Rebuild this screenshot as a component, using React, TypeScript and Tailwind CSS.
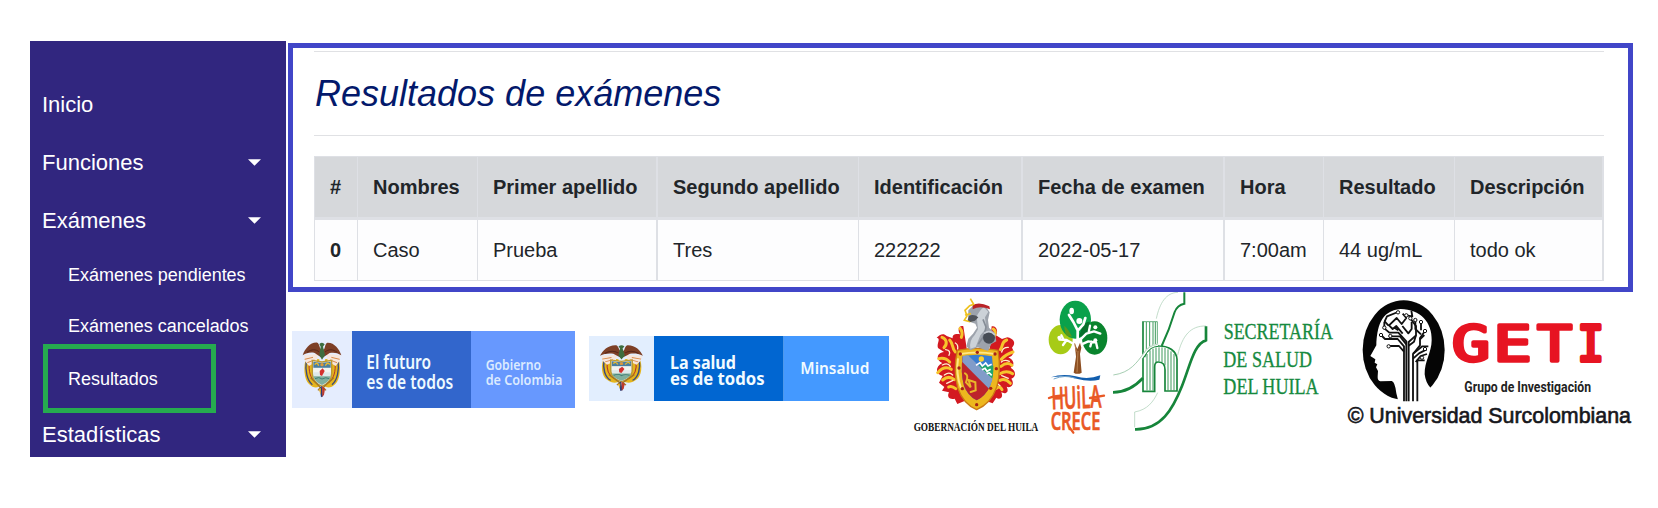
import React from "react";

type Column = { label: string; value: string; width: string; edge: string };

const columns: Column[] = [
  { label: "#", value: "0", width: "w-[43px]", edge: "border-l" },
  { label: "Nombres", value: "Caso", width: "w-[120px]", edge: "border-l" },
  { label: "Primer apellido", value: "Prueba", width: "w-[179px]", edge: "border-l" },
  { label: "Segundo apellido", value: "Tres", width: "w-[202px]", edge: "border-l-2" },
  { label: "Identificación", value: "222222", width: "w-[163px]", edge: "border-l" },
  { label: "Fecha de examen", value: "2022-05-17", width: "w-[202px]", edge: "border-l-2" },
  { label: "Hora", value: "7:00am", width: "w-[100px]", edge: "border-l-2" },
  { label: "Resultado", value: "44 ug/mL", width: "w-[131px]", edge: "border-l" },
  { label: "Descripción", value: "todo ok", width: "w-[150px]", edge: "border-l border-r-2" },
];

function Caret() {
  return (
    <svg width="13" height="7" viewBox="0 0 13 7" className="mb-[2px] mr-[25px]">
      <path d="M0 0.3H13L6.5 6.8Z" fill="#fff" />
    </svg>
  );
}

function MenuItem({ label, caret }: { label: string; caret?: boolean }) {
  return (
    <a className="flex h-[58px] items-center justify-between pl-[12px] text-[22px] leading-none text-white">
      <span>{label}</span>
      {caret && <Caret />}
    </a>
  );
}

function Sidebar() {
  return (
    <nav className="flex h-[416px] w-[256px] flex-col bg-[#31267f] pt-[35px]">
      <MenuItem label="Inicio" />
      <MenuItem label="Funciones" caret />
      <MenuItem label="Exámenes" caret />
      <a className="flex h-[50px] items-center pl-[38px] text-[18px] tracking-[-0.03px] text-white">Exámenes pendientes</a>
      <a className="flex h-[44px] items-end pb-[5px] pl-[38px] text-[18px] leading-[25px] tracking-[-0.03px] text-white">Exámenes cancelados</a>
      <a className="ml-[13px] flex h-[69px] w-[173px] items-center border-[5px] border-[#26ab4f] pl-5 pt-px text-[18px] tracking-[-0.03px] text-white">
        Resultados
      </a>
      <a className="mt-[4px] flex h-[36px] items-center justify-between pl-[12px] text-[22px] leading-none text-white">
        <span>Estadísticas</span>
        <Caret />
      </a>
    </nav>
  );
}

function ResultsPanel() {
  return (
    <section className="h-[249px] w-[1345px] border-[5px] border-[#4146c8] bg-white pl-[21px] pt-[3px]">
      <div className="w-[1290px]">
        <h1 className="flex h-[85px] items-center border-y border-[#e0e1e4] pl-px text-[36px] italic leading-none text-[#03196b]">
          Resultados de exámenes
        </h1>
        <table className="mt-[20px] w-[1290px] table-fixed border-separate border-spacing-0 text-left text-[20px] text-[#212529]">
          <thead>
            <tr>
              {columns.map((c) => (
                <th
                  key={c.label}
                  className={`h-[64px] whitespace-nowrap border-b-[3px] border-t border-[#dee0e5] bg-[#d6d8db] p-0 pl-[15px] font-bold ${c.width} ${c.edge}`}
                >
                  {c.label}
                </th>
              ))}
            </tr>
          </thead>
          <tbody>
            <tr>
              {columns.map((c, i) => (
                <td
                  key={c.label}
                  className={`h-[61px] whitespace-nowrap border-b border-[#dee0e5] bg-[#fdfdfe] p-0 pl-[15px] ${c.edge} ${i === 0 ? "font-bold" : ""}`}
                >
                  {c.value}
                </td>
              ))}
            </tr>
          </tbody>
        </table>
      </div>
    </section>
  );
}

/* National coat of arms, drawn inside the box 53..170 by 66..232. */
function Coat() {
  return (
    <g>
      <path d="M64 112C54 138 57 180 72 192C84 205 98 204 106 198L103 118Z" fill="#e5b51c" />
      <path d="M159 112C169 138 166 180 151 192C139 205 125 204 117 198L120 118Z" fill="#e5b51c" />
      <path d="M64 122C60 150 66 182 82 194M159 122C163 150 157 182 141 194" fill="none" stroke="#3a4a7c" strokeWidth="4" />
      <path d="M73 126C70 152 76 176 92 188M150 126C153 152 147 176 131 188" fill="none" stroke="#b1362c" strokeWidth="3" />
      <path d="M57 106L98 102L96 124L72 138L60 124ZM167 106L125 102L128 124L152 138L163 124Z" fill="#f7e6dc" />
      <path d="M59 118L84 112M67 128L88 120M164 118L139 112M156 128L135 120" stroke="#d88a4b" strokeWidth="3" />
      <path d="M53 106C60 86 76 66 97 68C104 72 103 84 108 88L111 84L116 89C121 84 119 72 127 68C148 67 163 87 169 106C156 97 144 97 134 99L124 106L111 114L99 106L89 99C78 96 65 98 53 106Z" fill="#7d3f26" />
      <path d="M66 97C80 87 92 87 103 96M157 97C143 87 131 87 120 96" stroke="#57271b" strokeWidth="3" fill="none" />
      <path d="M103 72Q112 64 119 73L114 80L120 105L111 119L103 105L107 80Z" fill="#3d6d3f" />
      <path d="M82 121L111 126L140 121V161C139 181 124 193 111 199C98 193 83 181 82 161Z" fill="#dfe8e9" stroke="#bc9933" strokeWidth="4" />
      <path d="M85 125L111 129L137 125V143H85Z" fill="#4a7ea0" />
      <path d="M89 134Q96 124 101 137M121 137Q129 124 134 134" stroke="#e7b82d" strokeWidth="4" fill="none" />
      <circle cx="111" cy="134" r="5" fill="#dd983d" />
      <path d="M85 144H137V157H85Z" fill="#f3f4f0" />
      <path d="M104 153L113 145L119 153L111 168L105 165Z" fill="#d4312e" />
      <path d="M85 169H137C134 183 121 190 111 195C101 190 88 183 85 169Z" fill="#80af9d" />
      <path d="M90 176Q102 169 111 177Q122 170 133 176" fill="none" stroke="#427e76" strokeWidth="3" />
      <path d="M77 173L106 202L99 211M146 173L115 202L123 211" stroke="#a37422" strokeWidth="4" fill="none" />
      <path d="M104 204L110 197L114 229L108 232Z" fill="#2a3d74" />
      <path d="M111 198L120 207L117 224L112 231Z" fill="#be3a2c" />
      <path d="M101 207L108 204L107 224Z" fill="#e6af25" />
    </g>
  );
}

function FuturoLogo() {
  return (
    <svg className="ml-[4px] mt-[39px] shrink-0" width="283" height="77" viewBox="21 33 849 231">
      <rect x="21" y="33" width="180" height="231" fill="#e5edfe" />
      <rect x="201" y="33" width="357" height="231" fill="#3266cc" />
      <rect x="558" y="33" width="312" height="231" fill="#6798fe" />
      <Coat />
      <g fontFamily="'Noto Sans', sans-serif" fontWeight="600">
        <g fontSize="57" fill="#eefaff">
          <text x="244" y="148" textLength="194" lengthAdjust="spacingAndGlyphs">El futuro</text>
          <text x="244" y="206" textLength="261" lengthAdjust="spacingAndGlyphs">es de todos</text>
        </g>
        <g fontSize="42" fill="#dbeaff">
          <text x="602" y="150" textLength="166" lengthAdjust="spacingAndGlyphs">Gobierno</text>
          <text x="602" y="196" textLength="230" lengthAdjust="spacingAndGlyphs">de Colombia</text>
        </g>
      </g>
    </svg>
  );
}

function SaludLogo() {
  return (
    <svg className="ml-[14px] mt-[44px] shrink-0" width="300" height="65" viewBox="27 48 900 195">
      <rect x="27" y="48" width="195" height="195" fill="#e2eefe" />
      <rect x="222" y="48" width="389" height="195" fill="#0166d1" />
      <rect x="611" y="48" width="316" height="195" fill="#4499ff" />
      <g transform="translate(60 74) scale(1.11 .837) translate(-53 -66)">
        <Coat />
      </g>
      <g fontFamily="'Noto Sans', sans-serif" fill="#f2fbff">
        <text x="270" y="146" fontSize="51" fontWeight="700" textLength="198" lengthAdjust="spacingAndGlyphs">La salud</text>
        <text x="270" y="195" fontSize="51" fontWeight="700" textLength="284" lengthAdjust="spacingAndGlyphs">es de todos</text>
        <text x="661" y="162" fontSize="46" fontWeight="600" textLength="207" lengthAdjust="spacingAndGlyphs">Minsalud</text>
      </g>
    </svg>
  );
}

function GobernacionLogo() {
  return (
    <svg className="ml-[21px] mt-[3px] shrink-0" width="132" height="142" viewBox="30 30 396 426">
      <g fill="#d31920">
        <path d="M190 124C176 120 172 135 180 148C166 146 157 148 158 160L140 153C129 142 118 151 110 158C124 161 109 174 114 189L132 201C105 205 111 228 127 234C105 245 106 267 128 273L117 293L133 306L126 317L147 322C139 337 151 345 164 341L172 357L199 346L200 190Z" />
        <path d="M275 124C289 120 296 139 288 151L306 162L322 157C340 160 350 174 336 188C344 200 341 213 325 217C343 226 345 241 332 248C351 259 347 277 334 281C346 297 332 311 320 305C329 323 316 328 304 322C312 340 297 345 289 338L278 355L258 348L270 180Z" />
      </g>
      <g fill="none" stroke="#f6c52c" strokeWidth="9" strokeLinecap="round">
        <path d="M126 157C139 161 144 176 132 188M149 165C162 179 154 188 166 201M116 221Q136 216 149 231M113 263Q134 240 154 253M128 285Q146 270 163 284M146 306Q155 301 167 311M180 130Q190 142 184 157" />
        <path d="M320 165C303 171 310 183 301 194M339 201Q317 208 304 223M336 241Q322 229 303 244M338 266Q320 254 300 266M331 295Q315 278 300 286M306 314Q300 301 289 310M280 132Q291 140 281 157" />
      </g>
      <g stroke="#fff0d0" strokeWidth="4" fill="none" strokeLinecap="round">
        <path d="M137 194Q154 196 147 211M127 240Q144 232 151 244M133 270Q148 259 158 270M140 295L159 286M166 174Q175 179 173 192M325 187Q309 186 305 201M328 229Q313 222 304 231M325 280L305 272M300 302L289 293" />
      </g>
      <path d="M172 196Q231 184 294 196Q304 260 290 307Q272 357 230 374Q190 357 173 308Q159 255 172 196Z" fill="#edb71e" stroke="#ca7a14" strokeWidth="4" />
      <path d="M181 207Q232 198 284 207M174 220Q167 267 183 309" fill="none" stroke="#ffe785" strokeWidth="6" />
      <path d="M188 214Q232 204 276 214Q283 266 271 301Q256 334 230 346Q203 332 192 302Q181 263 188 214Z" fill="#387dd1" />
      <path d="M188 214L270 305Q254 335 230 346Q203 332 192 302Q181 263 188 214Z" fill="#bd242b" />
      <path d="M223 241L280 242Q282 275 268 305Z" fill="#20a66d" />
      <path d="M188 213L204 211L278 282L267 311Q228 273 187 231Z" fill="#819cc9" />
      <path d="M228 241L240 233L247 243L257 234L264 243L275 238M246 254L255 250L261 259L272 253M260 266L268 264L275 271" fill="none" stroke="#fff" strokeWidth="5" />
      <circle cx="244" cy="222" r="8" fill="#ffd12d" />
      <path d="M195 265Q207 270 198 292L212 307L206 285L226 292L227 316L212 321" fill="none" stroke="#e9b829" strokeWidth="6" strokeLinecap="round" />
      <g fill="#a62218">
        <circle cx="181" cy="207" r="5" /><circle cx="232" cy="202" r="5" /><circle cx="285" cy="207" r="5" /><circle cx="177" cy="249" r="5" /><circle cx="289" cy="251" r="5" /><circle cx="187" cy="311" r="5" /><circle cx="272" cy="310" r="5" /><circle cx="230" cy="359" r="5" />
      </g>
      <path d="M199 184L205 161L219 146L231 128L226 116L217 113L204 109L205 76L225 57L256 62L269 82L264 105L267 128L284 144L289 169L274 177L264 198L233 187L211 196Z" fill="#9da3ac" />
      <path d="M230 94Q240 75 251 67L265 80L255 97L259 130L241 151L227 186L211 191Q207 167 224 150L234 133Z" fill="#ccd2d8" />
      <path d="M249 103L258 126L253 151L235 177" stroke="#858c96" strokeWidth="5" fill="none" />
      <circle cx="267" cy="158" r="18" fill="#464c55" />
      <path d="M252 145Q270 132 285 150" stroke="#c7ccd4" strokeWidth="5" fill="none" />
      <path d="M218 61Q236 49 268 64L270 73Q241 61 218 73Z" fill="#ba2327" />
      <path d="M211 41L221 58L209 62L195 76L201 93L193 106L209 110L224 99M195 90L213 86" stroke="#efc21e" strokeWidth="5" fill="none" />
      <path d="M207 93Q221 86 235 97L225 107L211 111L203 105Z" fill="#50545b" />
      <text x="41" y="439" fontFamily="'Liberation Serif', serif" fontWeight="700" fontSize="35" fill="#111" textLength="374" lengthAdjust="spacingAndGlyphs">GOBERNACIÓN DEL HUILA</text>
    </svg>
  );
}

function HuilaCreceLogo() {
  return (
    <svg className="ml-[3px] mt-[4px] shrink-0" width="66" height="140" viewBox="18 48 198 420">
      <ellipse cx="65" cy="179" rx="36" ry="44" fill="#a7cb16" />
      <ellipse cx="167" cy="174" rx="38" ry="50" fill="#09842d" />
      <ellipse cx="109" cy="119" rx="47" ry="57" fill="#0aa14b" />
      <path d="M130 140Q139 125 152 125Q155 143 143 163Q130 172 119 170Z" fill="#06712b" />
      <path d="M76 137Q88 147 99 170L84 168Q76 158 76 137Z" fill="#58981b" />
      <g fill="none" stroke="#fff" strokeWidth="7" strokeLinecap="round" strokeLinejoin="round">
        <path d="M116 199V151L103 126L90 105M117 151L133 133L139 114" strokeWidth="8" />
        <path d="M103 191L83 180L61 179M83 180L72 195M73 178L67 166" />
        <path d="M121 182L142 161L165 154L184 161M149 157L153 137" />
        <path d="M126 194L148 184L171 187L175 204M158 185L154 199" />
      </g>
      <g fill="#fff"><ellipse cx="98" cy="93" rx="7" ry="10" /><circle cx="121" cy="123" r="9" /><circle cx="61" cy="173" r="6" /><circle cx="169" cy="142" r="6" /><circle cx="169" cy="181" r="6" /></g>
      <path d="M107 190L115 207L123 188L127 203L123 222L128 278Q115 285 104 278L111 230Z" fill="#8d4f22" />
      <path d="M107 190L112 215M117 213L114 277" stroke="#ba8250" strokeWidth="3" />
      <path d="M36 292Q70 279 110 289Q147 300 184 286L181 299Q149 306 113 296Q77 285 36 292Z" fill="#125eae" />
      <path d="M44 297Q78 283 110 295" stroke="#77a8ce" strokeWidth="3" fill="none" />
      <g fontFamily="'Open Sans', sans-serif" fontWeight="600" fill="#e95824" stroke="#e95824" strokeWidth="2">
        <text x="37" y="385" fontSize="92" textLength="150" lengthAdjust="spacingAndGlyphs" transform="rotate(-2 111 360)">HUiLA</text>
        <text x="35" y="449" fontSize="75" textLength="149" lengthAdjust="spacingAndGlyphs">CRECE</text>
      </g>
      <path d="M30 354Q49 346 78 346M153 354L195 347M92 443L103 458" stroke="#e95824" strokeWidth="7" strokeLinecap="round" fill="none" />
    </svg>
  );
}

function SecretariaLogo() {
  return (
    <svg className="ml-[2px] shrink-0" width="222" height="144" viewBox="219 36 666 432">
      <g fill="none" stroke="#a4cbb1" strokeWidth="2">
        <path d="M219 287C267 281 290 252 310 223C324 198 334 193 355 192M349 116C359 69 378 38 414 37M413 226C427 166 452 137 498 138M284 396C323 389 340 365 353 338" />
        <path d="M284 396V442" />
      </g>
      <g fill="none" stroke="#16853a">
        <path d="M219 337C258 337 285 320 309 294" strokeWidth="8" />
        <path d="M365 198C385 156 395 126 404 96Q412 75 433 71M433 37V74" strokeWidth="6" />
        <path d="M285 448C364 450 399 386 426 318C451 255 462 190 499 181M498 139V184" strokeWidth="8" />
        <path d="M309 124V334H344V260Q344 245 356 246Q375 247 375 269V333H411V238C410 213 386 198 358 198C333 197 320 211 313 232" strokeWidth="5" />
        <path d="M311 125H352V192" strokeWidth="2" />
        <path d="M319 126V211M329 126V201M339 126V196M346 126V192M321 222V331M330 211V331M339 206V331M348 203V246M357 202V244M366 202V247M375 204V256M384 208V331M393 214V331M402 222V331" strokeWidth="2.5" />
      </g>
      <path d="M219 286C271 281 293 249 313 221Q329 195 354 194" fill="none" stroke="#fff" strokeWidth="7" />
      <path d="M220 285C271 278 291 247 311 220Q326 196 353 193" fill="none" stroke="#78b48b" strokeWidth="2" />
      <g fontFamily="'Liberation Serif', serif" fontSize="70" fill="#168a3e" stroke="#168a3e" strokeWidth="1">
        <text x="551" y="178" textLength="328" lengthAdjust="spacingAndGlyphs">SECRETARÍA</text>
        <text x="550" y="260" textLength="266" lengthAdjust="spacingAndGlyphs">DE SALUD</text>
        <text x="550" y="341" textLength="286" lengthAdjust="spacingAndGlyphs">DEL HUILA</text>
      </g>
    </svg>
  );
}

function GetiLogo() {
  return (
    <svg className="ml-[11px] shrink-0" width="288" height="144" viewBox="48 21 864 432">
      <ellipse cx="221" cy="195" rx="123" ry="149" fill="#050505" />
      <path d="M205 349L199 325Q195 290 185 288L151 289Q142 287 143 274L144 258L138 247L142 238L134 233L136 223L121 213L139 181C141 128 151 77 212 72C271 73 307 112 305 166C305 202 283 230 284 268Q287 294 302 309L290 326L274 340L264 352Z" fill="#fff" />
      <g fill="none" stroke="#111" strokeWidth="5.5" strokeLinejoin="round">
        <path d="M222 349V184L203 162H165L153 150M229 349V169L205 143H178L163 130V111M236 349V171L258 151V123L241 100M249 349V207L270 181V159L285 138M262 349V226H284" />
        <path d="M222 200L207 183H176M229 178L210 154H181M236 182L252 170L258 151M249 221L267 205L290 193M249 206L277 184H295M257 231L272 213L291 207" />
        <path d="M218 146L199 123L188 132L177 121L200 99L215 117L229 99L218 86M204 81L171 94L164 109L175 121M205 136L193 128M217 123L235 145L245 132V111M229 91L247 94L244 77M256 105V132L273 148M273 112V136M283 150L270 163" />
      </g>
      <g fill="#fff" stroke="#111" strokeWidth="3">
        <circle cx="153" cy="150" r="5" /><circle cx="163" cy="128" r="5" /><circle cx="176" cy="184" r="5" /><circle cx="181" cy="153" r="5" /><circle cx="204" cy="82" r="5" /><circle cx="229" cy="91" r="5" /><circle cx="241" cy="100" r="5" /><circle cx="256" cy="105" r="5" /><circle cx="273" cy="111" r="5" /><circle cx="285" cy="138" r="5" /><circle cx="285" cy="192" r="5" /><circle cx="276" cy="218" r="5" />
      </g>
      <g fill="#e71422" stroke="#e71422" strokeLinejoin="round" fontFamily="'DejaVu Sans Mono', monospace" fontSize="150">
        <text transform="translate(365 228) scale(1.28 1)" strokeWidth="10">G</text>
        <text transform="translate(490 228) scale(1.28 1)" strokeWidth="10">E</text>
        <text transform="translate(621 228) scale(1.17 1)" strokeWidth="10">T</text>
        <text transform="translate(742 228) scale(.9 1)" strokeWidth="12">I</text>
      </g>
      <text x="403" y="321" fontFamily="Roboto, sans-serif" fontWeight="700" fontSize="45" fill="#222" textLength="380" lengthAdjust="spacingAndGlyphs">Grupo de Investigación</text>
      <text x="53" y="415" fontFamily="'Liberation Sans', sans-serif" fontSize="68" fill="#17171c" stroke="#17171c" strokeWidth="2" textLength="850" lengthAdjust="spacingAndGlyphs">© Universidad Surcolombiana</text>
    </svg>
  );
}

export default function App() {
  return (
    <div className="flex h-[508px] w-[1658px] overflow-hidden bg-white pl-[30px] pt-[41px] font-['Liberation_Sans',Arial,sans-serif]">
      <Sidebar />
      <main className="ml-[2px] mt-[2px] flex w-[1345px] flex-col">
        <ResultsPanel />
        <footer className="flex items-start">
          <FuturoLogo />
          <SaludLogo />
          <GobernacionLogo />
          <HuilaCreceLogo />
          <SecretariaLogo />
          <GetiLogo />
        </footer>
      </main>
    </div>
  );
}
